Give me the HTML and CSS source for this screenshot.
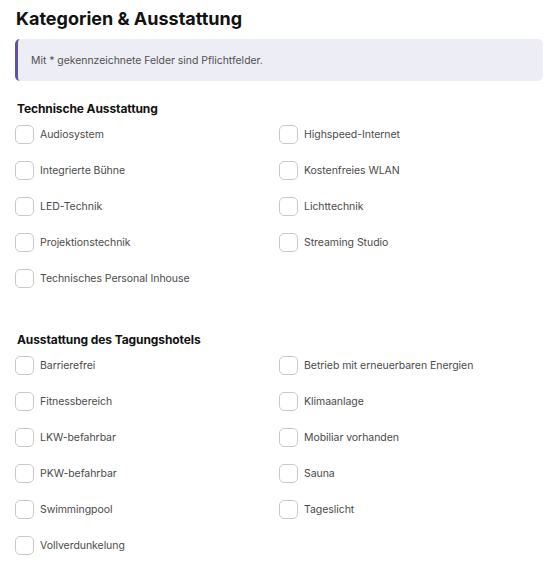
FILE: index.html
```html
<!DOCTYPE html>
<html lang="de">
<head>
<meta charset="utf-8">
<title>Kategorien &amp; Ausstattung</title>
<link rel="stylesheet" href="styles.css">
</head>
<body>
<main class="page">
  <h1 class="title">Kategorien &amp; Ausstattung</h1>
  <div class="notice">Mit * gekennzeichnete Felder sind Pflichtfelder.</div>

  <section class="group group-first">
    <h2 class="group-title">Technische Ausstattung</h2>
    <div class="grid">
      <label class="item"><span class="box"></span><span class="text">Audiosystem</span></label>
      <label class="item"><span class="box"></span><span class="text">Highspeed-Internet</span></label>
      <label class="item"><span class="box"></span><span class="text">Integrierte Bühne</span></label>
      <label class="item"><span class="box"></span><span class="text">Kostenfreies WLAN</span></label>
      <label class="item"><span class="box"></span><span class="text">LED-Technik</span></label>
      <label class="item"><span class="box"></span><span class="text">Lichttechnik</span></label>
      <label class="item"><span class="box"></span><span class="text">Projektionstechnik</span></label>
      <label class="item"><span class="box"></span><span class="text">Streaming Studio</span></label>
      <label class="item"><span class="box"></span><span class="text">Technisches Personal Inhouse</span></label>
    </div>
  </section>

  <section class="group group-second">
    <h2 class="group-title">Ausstattung des Tagungshotels</h2>
    <div class="grid">
      <label class="item"><span class="box"></span><span class="text">Barrierefrei</span></label>
      <label class="item"><span class="box"></span><span class="text">Betrieb mit erneuerbaren Energien</span></label>
      <label class="item"><span class="box"></span><span class="text">Fitnessbereich</span></label>
      <label class="item"><span class="box"></span><span class="text">Klimaanlage</span></label>
      <label class="item"><span class="box"></span><span class="text">LKW-befahrbar</span></label>
      <label class="item"><span class="box"></span><span class="text">Mobiliar vorhanden</span></label>
      <label class="item"><span class="box"></span><span class="text">PKW-befahrbar</span></label>
      <label class="item"><span class="box"></span><span class="text">Sauna</span></label>
      <label class="item"><span class="box"></span><span class="text">Swimmingpool</span></label>
      <label class="item"><span class="box"></span><span class="text">Tageslicht</span></label>
      <label class="item"><span class="box"></span><span class="text">Vollverdunkelung</span></label>
    </div>
  </section>
</main>
</body>
</html>
```

FILE: styles.css
```css
* { box-sizing: border-box; }
html, body { margin: 0; padding: 0; background: #ffffff; }
body {
  font-family: Inter, "Noto Sans", "Liberation Sans", sans-serif;
  color: #222;
}
.page {
  width: 552px;
  padding: 7px 9px 0 15px;
}
.title {
  margin: 0 0 8px 1px;
  font-size: 18px;
  line-height: 24px;
  font-weight: 700;
  color: #111;
  letter-spacing: 0;
}
.notice {
  height: 42px;
  display: flex;
  align-items: center;
  padding-left: 13px;
  background: #ededf5;
  border-left: 3px solid #5e4fa8;
  border-radius: 5px;
  font-size: 10.4px;
  color: #505050;
}
.group-first { margin-top: 21px; }
.group-second { margin-top: 37px; }
.group-title {
  margin: 0 0 0 2px;
  font-size: 12px;
  line-height: 14px;
  font-weight: 700;
  color: #111;
  letter-spacing: -0.1px;
}
.grid {
  display: grid;
  grid-template-columns: 264px 264px;
  grid-auto-rows: 36px;
}
.item {
  display: flex;
  align-items: center;
  gap: 6px;
}
.box {
  width: 19px;
  height: 19px;
  border: 1px solid #c9c9c9;
  border-radius: 5px;
  background: #fff;
  flex: none;
}
.text {
  font-size: 10.5px;
  color: #4a4a4a;
  letter-spacing: -0.05px;
}
```
